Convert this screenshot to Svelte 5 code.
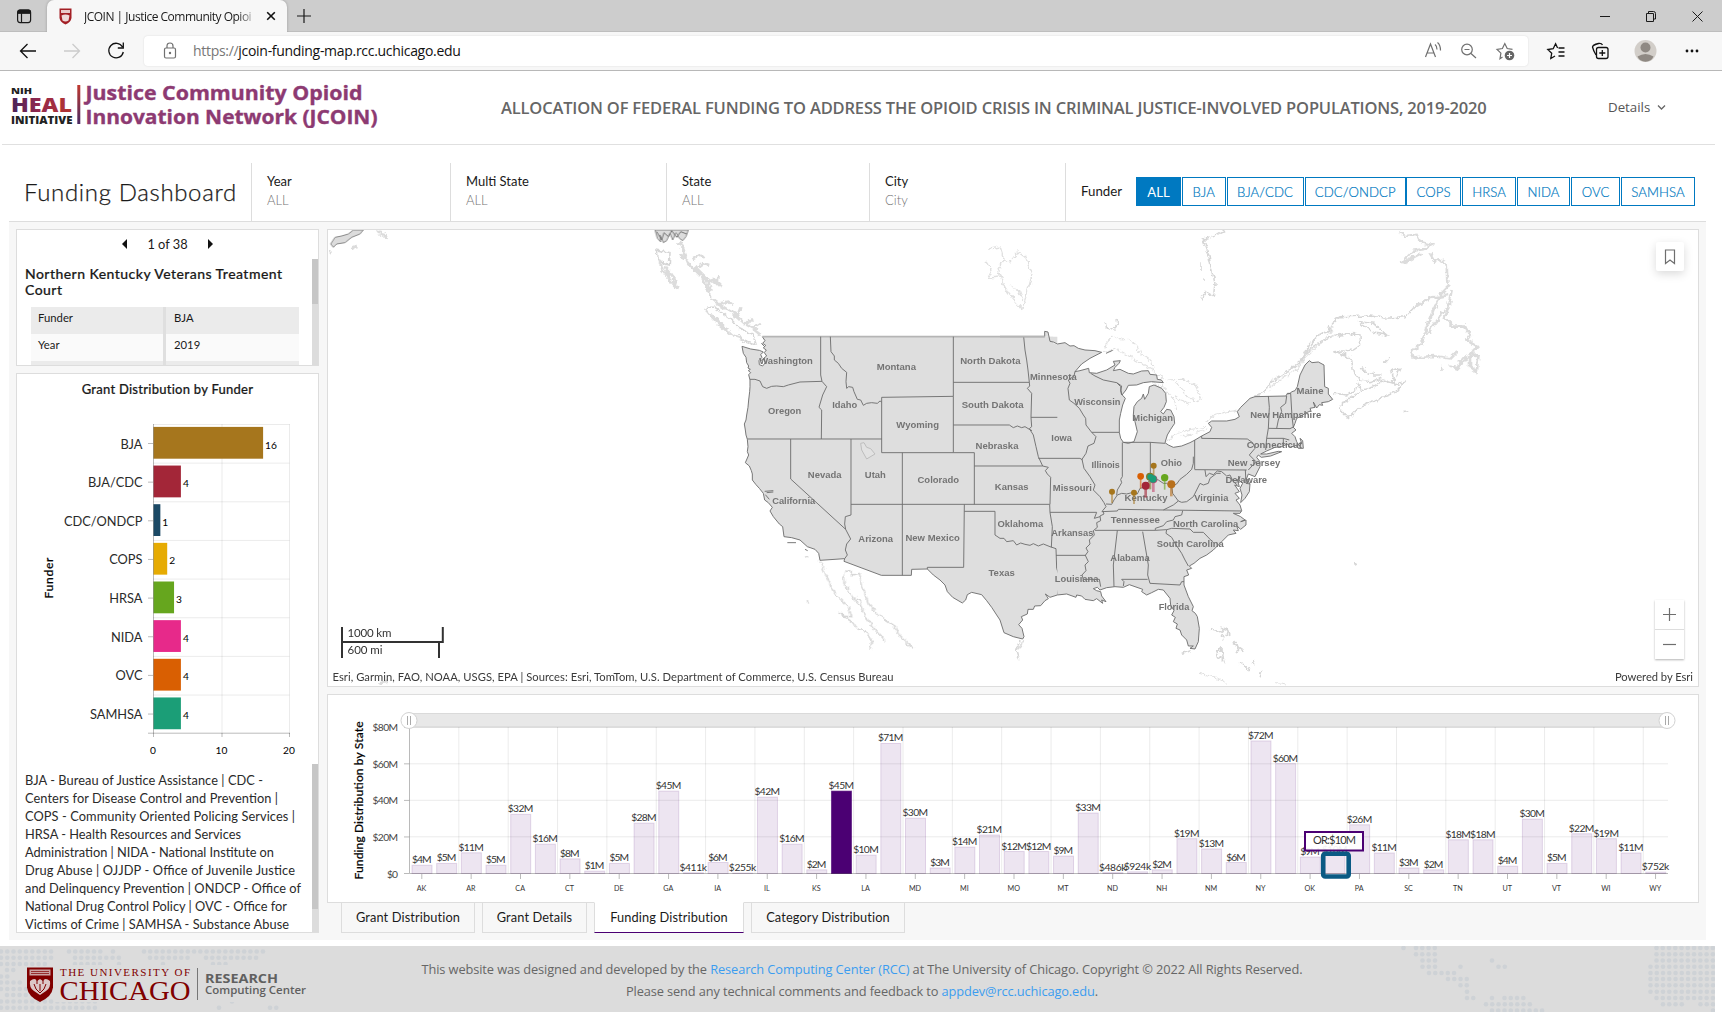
<script>
  const filters = [
    { label: 'Year', value: 'ALL', width: 199 },
    { label: 'Multi State', value: 'ALL', width: 216 },
    { label: 'State', value: 'ALL', width: 203 },
    { label: 'City', value: 'City', width: 196 }
  ];
  const buttons = [
    ['ALL', 45, 1], ['BJA', 43.5, 1], ['BJA/CDC', 77, 1], ['CDC/ONDCP', 101.500, 0], ['COPS', 55, 1],
    ['HRSA', 54, 1], ['NIDA', 53, 1], ['OVC', 49, 1], ['SAMHSA', 74, 0]
  ];
  const grants = [
    ['BJA', 16, '#a6761d'], ['BJA/CDC', 4, '#a32638'], ['CDC/ONDCP', 1, '#1b4965'], ['COPS', 2, '#e6ab02'],
    ['HRSA', 3, '#66a61e'], ['NIDA', 4, '#e7298a'], ['OVC', 4, '#d95f02'], ['SAMHSA', 4, '#1b9e77']
  ];
  const glossary = [
    'BJA - Bureau of Justice Assistance | CDC -',
    'Centers for Disease Control and Prevention |',
    'COPS - Community Oriented Policing Services |',
    'HRSA - Health Resources and Services',
    'Administration | NIDA - National Institute on',
    'Drug Abuse | OJJDP - Office of Juvenile Justice',
    'and Delinquency Prevention | ONDCP - Office of',
    'National Drug Control Policy | OVC - Office for',
    'Victims of Crime | SAMHSA - Substance Abuse'
  ];
  const glossaryWidths = [238, 253, 270, 216, 249, 270, 276, 262, 264];
  const states = [
    ['AK', 4.5, '$4M'], ['AL', 5.5, '$5M'], ['AR', 11.3, '$11M'], ['AZ', 4.5, '$5M'], ['CA', 32.3, '$32M'],
    ['CO', 16, '$16M'], ['CT', 8, '$8M'], ['DC', 1.3, '$1M'], ['DE', 5.5, '$5M'], ['FL', 27.5, '$28M'],
    ['GA', 45, '$45M'], ['HI', 0.41, '$411k'], ['IA', 6, '$6M'], ['ID', 0.26, '$255k'], ['IL', 41.7, '$42M'],
    ['IN', 16, '$16M'], ['KS', 2, '$2M'], ['KY', 45, '$45M'], ['LA', 10, '$10M'], ['MA', 71, '$71M'],
    ['MD', 30.2, '$30M'], ['ME', 3, '$3M'], ['MI', 14.4, '$14M'], ['MN', 21, '$21M'], ['MO', 12, '$12M'],
    ['MS', 12, '$12M'], ['MT', 9.5, '$9M'], ['NC', 33, '$33M'], ['ND', 0.49, '$486k'], ['NE', 0.92, '$924k'],
    ['NH', 2, '$2M'], ['NJ', 19, '$19M'], ['NM', 13.4, '$13M'], ['NV', 6, '$6M'], ['NY', 72.4, '$72M'],
    ['OH', 60, '$60M'], ['OK', 9, '$9M'], ['OR', 10, '$10M'], ['PA', 26.6, '$26M'], ['RI', 11.2, '$11M'],
    ['SC', 3, '$3M'], ['SD', 2, '$2M'], ['TN', 18.4, '$18M'], ['TX', 18.4, '$18M'], ['UT', 4, '$4M'],
    ['VA', 29.7, '$30M'], ['VT', 5.5, '$5M'], ['WA', 21.7, '$22M'], ['WI', 19, '$19M'], ['WV', 11.2, '$11M'],
    ['WY', 0.75, '$752k']
  ];
  const x0 = 409.5;
  const step = 24.675;
  const y0 = 873.5;
  const perM = 1.831;

  // Map labels: western half and eastern half, each in its own drawing frame.
  const westLabels = [
    ['Washington', 198, 122, 161], ['Montana', 529, 140, 118], ['North Dakota', 811, 122, 181], ['Minnesota', 1000, 170, 140],
    ['Oregon', 194, 273, 100], ['Idaho', 374, 254, 75], ['South Dakota', 818, 254, 186], ['Wyoming', 593, 313, 128],
    ['Nebraska', 831, 378, 129], ['Iowa', 1025, 354, 62], ['Nevada', 314, 464, 101], ['Utah', 466, 464, 63],
    ['Colorado', 655, 478, 125], ['Kansas', 875, 499, 101], ['California', 221, 543, 129], ['Arizona', 467, 657, 104],
    ['New Mexico', 638, 652, 163], ['Oklahoma', 901, 610, 137], ['Texas', 845, 759, 79]
  ];
  const eastLabels = [
    ['Wisconsin', 292, 246, 139], ['Michigan', 458, 292, 122], ['Illinois', 317, 435, 85], ['Ohio', 514, 428, 64],
    ['Missouri', 217, 503, 117], ['Kentucky', 438, 534, 129], ['Virginia', 634, 534, 102], ['Tennessee', 406, 600, 147],
    ['Arkansas', 217, 637, 126], ['North Carolina', 617, 611, 196], ['South Carolina', 571, 672, 201], ['Alabama', 390, 714, 118],
    ['Louisiana', 230, 776, 131], ['Florida', 522, 861, 92], ['Maine', 930, 213, 81], ['New Hampshire', 857, 285, 213],
    ['Connecticut', 823, 373, 165], ['New Jersey', 762, 428, 158], ['Delaware', 739, 480, 125]
  ];
  const westBorders = [
    'M302 50V165L306 184L320 200L308 225L297 262L305 270L304 357',
    'M90 178L105 178L120 183L128 200L140 205L155 199L170 198L190 200L205 195L240 186L306 184',
    'M82 357H486',
    'M331 50L333 95L343 108V120L355 130L365 145L380 157L378 185L380 205L386 200L398 202L402 215L412 238L422 240L430 256L440 250L455 248L472 250L480 243L485 246',
    'M485 232L700 229V398H485Z', 'M700 50V229', 'M700 187H928', 'M911 50L915 90L920 120L924 150L928 187',
    'M928 187L929 198L922 205L935 220L933 292L935 320L928 326', 'M700 315L868 315L880 323L892 318L905 323L915 320L928 328L936 332',
    'M933 292H1095', 'M928 326L940 345L948 380L955 410L968 438', 'M763 438H968', 'M968 438L985 442L976 452L982 462L992 472L990 553',
    'M700 398H763V553', 'M547 398V766', 'M393 553H989', 'M212 357V477L377 628',
    'M393 357V585L376 590L374 612L377 628L392 657L380 672L376 690L382 705L374 716', 'M733 553L731 742H622V747',
    'M733 574H825V645L840 655L852 655L860 665L880 662L890 675L902 669L915 673L930 676L940 671L955 678L970 672L990 680L1008 686',
    'M989 553L990 577L997 620L994 682', 'M1008 686L1010 745L1022 780L1012 825'
  ];
  const eastBorders = [
    'M115 415L240 415L248 420', 'M225 155L222 168L205 180L210 190L204 205L208 240L222 250L238 265L250 285L257 295',
    'M275 337H358', 'M257 295L258 315L275 337L288 350L282 370L264 378L258 400L246 418L252 445L270 470L285 495L280 510L300 530L312 548L318 560',
    'M150 577L290 577L283 595L300 590', 'M318 560L308 572L312 582L300 588L302 602L290 608L292 622L280 632L283 645L268 660L270 672L258 684L264 695L256 706L265 725L255 735L258 752L246 765L250 778',
    'M168 706H258', 'M248 778L298 778L302 800', 'M305 575L352 573L355 568L490 570L725 573', 'M285 631H466L500 629',
    'M318 552L335 553L342 540L352 525L365 520L380 522L400 517L412 522L420 505L432 502L440 490L450 482L452 475L475 480L490 490L500 490L515 500',
    'M367 367V470L362 478L365 488L352 510L350 525', 'M451 367V480', 'M370 367H450L495 370', 'M584 360V448', 'M584 449L740 450',
    'M580 410L580 430L575 448L560 463L540 478L530 492L515 500L518 520L535 543', 'M535 543L520 555L490 570',
    'M535 543L545 547L560 545L580 530L590 510L600 490L610 495L625 490L630 475L650 460L662 460', 'M615 450L618 470L628 460L640 464L652 453L665 455L680 468L690 465L700 485L712 495',
    'M548 572L545 585L525 590L520 600L500 605L490 617L466 625V631', 'M500 629L515 625L570 627L580 637L610 637L640 668',
    'M500 629L498 640L515 652L525 670L545 700L555 720L565 738', 'M428 635L445 735L443 765L450 790', 'M352 631L340 735L342 800',
    'M365 778L443 778', 'M365 778L372 785L370 798', 'M450 790L540 795L545 785L552 785', 'M605 348V355L742 357L758 368L765 385L748 405L768 425L745 450',
    'M805 228L808 262L805 325L800 355L797 390', 'M860 228L857 250L842 262L845 275L835 300L830 325', 'M862 222L872 220L876 290L880 322',
    'M800 355H850L868 360', 'M805 325L870 326L882 320', 'M850 355L850 378', 'M736 450L738 490L750 492', 'M350 188L310 180L285 168L272 160'
  ];
  const westCoast =
    'M127 50L135 62L128 70L137 76L130 84L139 90L133 98L140 108L132 114L136 128L128 138L118 134L117 122L126 112L122 104L130 96L118 91L92 87L66 79L70 100L78 112L80 128L86 138L84 144L91 148L85 152L92 158L86 164L90 180L90 200L89 215L86 240L84 262L80 285L78 300L73 312L76 330L78 345L82 358L84 380L82 395L86 405L76 428L88 438L94 452L97 462L97 480L108 494L118 505L130 520L134 540L145 548L157 562L150 573L160 590L178 612L188 620L192 650L215 653L240 660L262 680L285 688L296 700L300 721L374 716L372 724L484 766L574 766L575 748L622 747L640 765L660 780L675 795L682 815L698 832L727 849L737 840L742 824L755 817L785 824L800 842L815 862L830 885L840 900L852 938L880 950L908 957L912 950L906 925L896 914L908 900L904 890L922 882L924 868L940 868L944 858L962 857L975 842L985 836L976 822L990 832L1012 825';
  const eastCoast =
    'M134 50V34L144 36L150 64L160 66L172 72L195 68L210 78L222 77L235 85L255 90L285 92L305 97L270 115L245 132L225 155L240 152L266 145L268 158L290 160L320 150L345 135L340 124L361 122L357 130L345 142L340 152L360 148L385 160L400 162L425 153L445 152L450 163L470 165L472 178L484 180L490 188L455 185L430 188L410 195L385 196L378 210L366 225L362 212L365 198L350 188L362 200L364 222L376 235L368 255L362 280L358 300V337L362 355L370 367L385 370L402 365L412 335L405 305L400 285L402 260L412 245L425 235L430 222L434 238L445 220L448 200L462 195L485 205L497 220L499 245L492 262L482 275L490 282L500 268L512 270L522 290L524 310L512 328L502 345L495 368L505 375L520 382L545 378L570 368L585 360L605 348L630 335L635 322L625 310L635 303L680 303L705 298L718 290L712 275L722 262L750 235L765 230L858 228L862 220L870 220L876 215L885 212L892 200L900 165L915 135L928 122L936 128L955 126L972 135L974 200L985 205L985 222L998 238L985 245L965 248L968 256L958 254L950 264L940 246L945 262L930 265L933 272L915 280L905 288L890 295L885 310L880 322L888 330L875 340L885 350L890 365L898 378L905 370L900 355L908 362L910 385L895 385L890 376L870 382L862 372L845 380L825 382L800 393L782 402L800 402L835 394L845 395L812 408L784 412L775 405L770 412L780 425L780 440L765 470L745 462L740 475L750 492L748 515L735 535L722 548L726 525L720 505L728 490L716 480L720 470L712 480L718 500L704 495L718 515L705 520L718 535L708 540L720 555L725 572L720 580L700 580L722 590L735 600L722 605L738 600L738 615L722 628L710 618L715 632L700 630L708 640L685 645L665 665L640 690L620 705L600 715L582 730L568 738L575 745L560 750L566 765L552 770L552 795L565 830L580 860L576 872L586 880L592 890L598 925L595 965L585 987L570 985L580 978L565 978L560 960L545 945L540 930L528 925L532 912L520 905L526 892L515 885L522 872L512 855L510 835L490 810L475 808L455 818L440 825L425 815L428 808L405 800L388 794L370 802L345 800L320 803L300 810L292 802L280 806L290 812L302 815L305 828L318 845L305 840L308 850L290 836L280 842L255 838L245 828L230 825L228 832L200 822L172 825';

  const pins = [
    [461, 437, 9, '#a6761d', 30], [336, 515, 9, '#a6761d', 32], [402, 518, 9, '#a6761d', 32], [422, 469, 10, '#d95f02', 34],
    [450, 470, 12, '#7f7a2a', 36], [460, 478, 12, '#c2476f', 36], [494, 473, 11, '#66a61e', 34], [514, 493, 12, '#b8701c', 34],
    [459, 477, 11, '#1b9e77', 0], [451, 471, 9, '#1b9e77', 0], [437, 497, 12, '#a32638', 34]
  ];

  // Footer dot-matrix: [row y, first x, count]
  const dotRuns = [
    [948, 1403.5, 1], [948, 1416, 4], [954.3, 1416, 4], [960.5, 1422.5, 3], [966.8, 1422.5, 3], [966.8, 1460.5, 1], [973, 1429, 5],
    [979, 1448, 4], [985.3, 1460.5, 2], [991.8, 1467, 1], [998, 1467, 2], [998, 1492, 1], [998, 1504.5, 4], [1004.3, 1486, 8], [1010.5, 1492, 9],
    [960.5, 1492, 1], [966.8, 1498.5, 2],
    [948, 1656.5, 10], [954.3, 1656.5, 10], [960.5, 1656.5, 10], [966.8, 1650.5, 11], [973, 1650.5, 11], [979, 1650.5, 11], [985.3, 1650.5, 11],
    [991.8, 1650.5, 11], [998, 1656.5, 10], [1004.3, 1663, 4], [1004.3, 1700.5, 3], [1010.5, 1713, 1],
    [951.5, 1, 9], [951.5, 69, 6], [951.5, 113, 1], [951.5, 144, 20], [957.7, 1, 9], [957.7, 75, 8], [957.7, 150, 7], [957.7, 206, 9],
    [964, 1, 8], [964, 75, 5], [964, 119, 1], [964, 163, 1], [964, 213, 3], [970, 7, 2], [970, 163, 1], [970, 219, 2],
    [976.5, 1, 2], [976.5, 156, 2], [982.5, 1, 4], [989, 1, 5], [995, 7, 4], [1001.5, 1, 16], [1007.7, 1, 16], [1001.5, 232, 1], [1007.7, 219, 1], [1007.7, 270, 2]
  ];
  const dots = dotRuns.flatMap(([y, x, n]) => Array.from({ length: n }, (_, i) => [x + i * 6.26, y]));
</script>

<div class="window">
  <div class="tabstrip">
    <svg class="actions" width="47" height="32" viewBox="0 0 47 32"><rect x="17.6" y="10.1" width="13" height="12.5" rx="2.5" /><path d="M21.5 13v9.5M18 13.2h13" /><path class="solid" d="M17.5 12a2.5 2.5 0 0 1 2.5-2.5h8.5a2.5 2.5 0 0 1 2.5 2.5v1.5H17.5z" /></svg>
    <div class="tab">
      <svg width="13" height="17" viewBox="0 0 13 17"><path d="M.5.5h12v9.5q-.6 4.400-6 6.500Q1.100 14.400.5 10z" fill="#a31f25" /><path d="M2 2h9v3H2z" fill="#e9c9c9" /><path d="M2.500 7.500Q6.500 5.500 10.500 7.500L9.500 12.500Q6.500 14.500 3.500 12.500z" fill="#efdada" /></svg>
      <span class="tabtitle">JCOIN | Justice Community Opioi</span>
      <svg class="tabclose" width="10" height="10" viewBox="0 0 10 10"><path d="M1.200 1.200l7.600 7.600M8.800 1.200L1.200 8.800" /></svg>
    </div>
    <svg class="newtab" width="16" height="16" viewBox="0 0 16 16"><path d="M8 1v14M1 8h14" /></svg>
    <svg class="controls" width="122" height="32" viewBox="1601 0 122 32"><path d="M1601 16.500h10M1647.500 13.500h7v8h-7zM1649.500 13v-1.500h5q2 0 2 2v5.500h-1.500M1693.500 11.500l10 10M1703.500 11.500l-10 10" /></svg>
  </div>
  <div class="toolbar">
    <svg class="nav" width="144" height="38" viewBox="0 32 144 38">
      <path d="M36 51H20.500M27.500 44l-7 7 7 7" />
      <path class="off" d="M64 51h15.500M72.500 44l7 7-7 7" />
      <path d="M122.500 47a7.300 7.300 0 1 0 .8 5M123.300 42.500v5.500h-5.500" />
    </svg>
    <div class="address">
      <svg class="lock" width="14" height="18" viewBox="0 0 14 18"><rect x="1.500" y="6" width="11" height="10" rx="1.500" /><path d="M4 6V4q0-3 3-3t3 3v2" /><circle cx="7" cy="11" r=".6" /></svg>
      <span class="url"><i>https://</i>jcoin-funding-map.rcc.uchicago.edu</span>
      <svg class="right-icons" width="100" height="30" viewBox="1425 36 100 30">
        <path d="M1426.500 57l5-13 5 13M1428.500 53h6.500M1436 44.500q2 1.500 2 5M1438.500 42.500q3 2.500 3 8" />
        <circle cx="1468" cy="49.500" r="5.300" /><path d="M1472 53.500l5 4.500M1465.500 49.500h5" />
        <path d="M1503.500 57l-2.500 1.700.9-5.500-3.900-3.900 5.400-.8 2.400-4.900 2.400 4.900 5.300.8" />
        <circle class="dark" cx="1510.500" cy="55.500" r="4.800" /><path class="white" d="M1508 55.500h5M1510.500 53v5" />
      </svg>
    </div>
    <svg class="tools" width="194" height="38" viewBox="1529 32 194 38">
      <path d="M1556 56l-4.200 2.500.9-5.200-3.900-3.800 5.400-.8 2.400-4.900 2 4.200M1559.500 48h6M1559.500 52h6M1559.500 56h6" />
      <rect x="1597.500" y="47.500" width="11.500" height="11" rx="2" /><path d="M1603.300 50v6M1600.300 53h6M1597 55q-2.500-4-3.500-8 0-2 6-3.500 3-.5 4 1.500" />
      <circle cx="1646.500" cy="51" r="11" fill="#d2cec9" stroke="none" /><circle cx="1646.500" cy="47.500" r="5" fill="#8f8983" stroke="none" /><path d="M1638.500 56.500q8-5 16 0-2 5-8 5.200-6-.2-8-5.200z" fill="#8f8983" stroke="none" />
      <circle class="dot" cx="1688" cy="51" r="1.400" /><circle class="dot" cx="1693" cy="51" r="1.400" /><circle class="dot" cx="1698" cy="51" r="1.400" />
    </svg>
  </div>

  <header>
    <svg class="jcoin" width="372" height="46" viewBox="10 82 372 46">
      <defs>
        <linearGradient id="heal" x1="0" x2="1"><stop offset="0" stop-color="#45255a" /><stop offset=".45" stop-color="#93284e" /><stop offset="1" stop-color="#b5352f" /></linearGradient>
        <linearGradient id="bar" x1="0" x2="0" y1="0" y2="1"><stop offset="0" stop-color="#c0392f" /><stop offset="1" stop-color="#4a2a63" /></linearGradient>
      </defs>
      <text x="11" y="93.500" font-size="9.500" fill="#222" textLength="21" lengthAdjust="spacingAndGlyphs">NIH</text>
      <text x="11" y="111.500" font-size="20" fill="url(#heal)" textLength="61" lengthAdjust="spacingAndGlyphs">HEAL</text>
      <text x="11" y="123.500" font-size="10.500" fill="#222" textLength="61.500" lengthAdjust="spacingAndGlyphs">INITIATIVE</text>
      <path d="M77.300 85h3v39h-3z" fill="url(#bar)" />
      <g font-weight="700" fill="#8d3a72" stroke="#8d3a72" stroke-width=".35" font-size="19">
        <text x="85.500" y="99.800" textLength="277" lengthAdjust="spacingAndGlyphs">Justice Community Opioid</text>
        <text x="85.500" y="123.500" textLength="292" lengthAdjust="spacingAndGlyphs">Innovation Network (JCOIN)</text>
      </g>
    </svg>
    <h1>ALLOCATION OF FEDERAL FUNDING TO ADDRESS THE OPIOID CRISIS IN CRIMINAL JUSTICE-INVOLVED POPULATIONS, 2019-2020</h1>
    <div class="details">Details <svg width="9" height="7" viewBox="0 0 9 7"><path d="M1 1.500l3.500 3.500L8 1.500" /></svg></div>
  </header>

  <section class="filters">
    <h2>Funding Dashboard</h2>
    {#each filters as f}
      <div class="filter" style:width="{f.width}px"><b>{f.label}</b><span>{f.value}</span></div>
    {/each}
    <div class="funder">
      <b>Funder</b>
      <div class="btns">
        {#each buttons as [label, w, gap], i}
          <button class:active={i === 0} class:gap={gap === 1} style:width="{w}px">{label}</button>
        {/each}
      </div>
    </div>
  </section>

  <main>
    <aside>
      <div class="card record">
        <div class="pager"><i class="prev"></i><span>1 of 38</span><i class="next"></i></div>
        <div class="scroller">
          <div class="body">
            <h3>Northern Kentucky Veterans Treatment<br />Court</h3>
            <div class="row"><span>Funder</span><span>BJA</span></div>
            <div class="row light"><span>Year</span><span>2019</span></div>
            <div class="row"><span></span><span></span></div>
          </div>
          <div class="track"><div class="thumb t1"></div></div>
        </div>
      </div>
      <div class="card grants">
        <h4>Grant Distribution by Funder</h4>
        <svg width="301" height="364" viewBox="17 400 301 364">
          <g class="grid">
            {#each grants as _, i}<path d="M153 {424.500 + i * 38.650}H289.500" />{/each}
            <path d="M222 424V733M289.500 424V733" />
          </g>
          {#each grants as [name, n, color], i}
            <path class="tick" d="M148 {443.500 + i * 38.650}h5" />
            <rect x="153.500" y={426.900 + i * 38.650} width={n * 6.850} height="31.800" fill={color} />
            <text class="cat" x="142.500" y={448.500 + i * 38.650}>{name}</text>
            <text class="num" x={155.500 + n * 6.850} y={448.500 + i * 38.650}>{n}</text>
          {/each}
          <path class="axis" d="M153.500 424V737M148 733.200H290M222 733v4M289.500 733v4" />
          <text class="num mid" x="153" y="754">0</text><text class="num mid" x="221.500" y="754">10</text><text class="num mid" x="289" y="754">20</text>
          <text class="vert" transform="translate(53 578) rotate(-90)" textLength="41">Funder</text>
        </svg>
        <div class="scroller gl">
          <svg class="glossary" width="295" height="168" viewBox="17 764 295 168">
            {#each glossary as line, i}<text x="25" y={785.300 + i * 18} textLength={glossaryWidths[i]}>{line}</text>{/each}
          </svg>
          <div class="track"><div class="thumb t2"></div></div>
        </div>
      </div>
    </aside>

    <div class="content">
      <div class="card map">
        <svg width="1370" height="456" viewBox="328 230 1370 456">
          <defs>
            <filter id="rough" x="-5%" y="-5%" width="110%" height="110%"><feTurbulence type="fractalNoise" baseFrequency=".2" numOctaves="3" seed="4" /><feDisplacementMap in="SourceGraphic" scale="6" xChannelSelector="R" yChannelSelector="G" /></filter>
          </defs>
          <g class="abroad" filter="url(#rough)">
            <g transform="translate(320 220) scale(.33333)">
              <path class="heavy" d="M1078 65L1092 100L1105 130L1130 155L1145 170L1160 200L1175 235L1195 252L1225 270L1250 288L1275 312L1300 325L1325 345M1085 75L1098 108M1125 140L1160 175L1172 210M1210 262L1255 288M1080 100L1092 118M1118 118L1140 105L1150 115M1130 145L1150 130L1168 135M1150 175L1180 185L1198 168M1160 190L1190 185L1205 200M1200 250L1225 245L1240 255M1240 290L1255 280L1262 262M1280 315L1298 295M1300 325L1322 310" />
              <path d="M1010 90L1050 98L1048 135L1025 130L1010 110Z" /><path class="heavy" d="M1018 120L1028 150L1050 180L1072 205L1060 170L1035 140L1050 175" />
              <path class="heavy" d="M1155 265L1175 290L1200 315L1235 345L1262 355M1185 295L1225 330" /><path d="M1155 262L1185 262L1230 295L1260 325L1300 345L1308 375L1270 362L1255 340" />
              <path class="heavy" d="M170 38L190 42L205 55M95 80L110 82M25 97L35 95M175 1390L205 1385" />
            </g>
            <g transform="translate(720 320) scale(.33333)">
              <path d="M300 722L320 770L345 822L385 860L395 890L365 888L360 875L375 892L395 905L410 925L440 938L455 965L450 990M370 760L372 790L395 825L410 850L425 860L440 895L470 935L495 965M370 755L385 752L400 765L418 760L428 800L445 850L480 890L520 915L540 950L580 985M402 830L420 840L425 855" />
              <path d="M262 840L264 852M256 708L262 712" /><path d="M912 960L905 975L895 985" />
            </g>
            <g transform="translate(1000 320) scale(.33333)">
              <path d="M318 0L322 25L340 30L352 15L348 0" /><path class="thin" d="M313 85L325 60L345 48L365 60L385 58L410 75L420 100L455 125L460 150M310 98L345 85L460 150L490 180M500 180L550 178L585 195L605 235L590 245L560 230L545 205L525 190M525 230L540 240L570 250M455 185L495 205L520 235L530 265M500 372L520 345L560 330L620 322M620 305L640 285L680 275L715 270M545 350L590 338L622 330" />
              <path class="thin" d="M765 228L800 210L840 180L890 150L915 115L960 75L1000 20M885 150L925 95L1000 45L1060 40" />
              <path d="M545 1000L575 992M630 930L660 935L680 925L690 945M665 940L672 955M650 1000L660 980L670 1010M700 965L715 980L730 990M60 960L50 990L58 1018M1062 732L1070 730" />
            </g>
            <g transform="translate(1200 220) scale(.33333)">
              <path d="M75 30L40 50L10 60L25 100L35 150L45 190L40 230L15 215L5 245" /><path d="M3 130V150M12 175V180" />
              <path class="heavy" d="M595 35L615 48L650 45L660 65L695 75L670 88L640 92L605 130L625 122L665 100M690 100L705 125L725 120L740 130L742 185L745 200L715 230L685 235L655 255L640 265" />
              <path d="M640 265L615 290L560 295L510 288L420 290L395 310L388 330L350 350L325 380L300 425L275 445L210 490L195 515L160 530" />
              <path d="M300 425L330 385L380 355L440 340L480 345L482 375L460 390L400 395L440 405L455 420L460 455L480 480L510 485L545 475L545 465L520 465L480 445M475 305L520 310L560 345L525 340L485 315ZM565 415L550 430M400 520L440 525L480 500M475 490L485 512L520 500L550 480L580 490L600 445L575 450L585 495L615 485L590 515L530 540L480 560L445 595L422 570L425 550L480 515M610 575L625 572" />
              <path class="heavy" d="M755 210L745 260L735 295L760 320L795 320L812 345L800 360L830 380L815 400L835 410L830 455L810 440L810 405L785 420L775 445L745 440M745 225L720 230L700 270L675 335L665 370L635 395L640 412L700 408L750 415L770 395M680 345L735 270M725 435L728 450" />
              <path d="M65 1222L85 1235L80 1252M30 1230L60 1235M50 1290L60 1282L72 1325L55 1310ZM98 1270L118 1282L110 1300M120 1330L150 1350M165 1320L160 1335M185 1355L180 1370M465 1031L470 1030" /><path class="thin" d="M0 1360L40 1370L80 1390M230 1388L260 1392" />
            </g>
            <path class="thin" d="M989 249L1000 247L1004 260L998 268L1002 282L1008 292L1016 302L1022 309L1028 290L1032 275L1026 258L1018 252L1010 262L1004 260M986 262L992 270L988 278L1000 277M1010 285L1018 290L1022 300" />
          </g>
          <g transform="translate(320 220) scale(.33333)">
            <path class="land" d="M32 72L45 52L65 48L85 42L100 30H130L120 42L95 52L75 68L50 72L40 82Z" />
            <path class="land" d="M1005 30H1105L1098 50L1088 62L1078 55L1068 38L1058 60L1050 40L1040 62L1030 68L1020 45L1022 66L1012 55Z" /><path class="edge" d="M1010 35L1025 60L1032 38L1045 50L1055 32L1070 52L1082 35L1100 42" />
          </g>
          <g transform="translate(720 320) scale(.33333)">
            <path class="fill" d="{westCoast}H1030V80L1000 70V50Z" />
            <path class="edge" d={westCoast} /><path class="lightedge" d="M127 50H974" />
            {#each westBorders as d}<path class="edge" {d} />{/each}
            <path class="lake" d="M422 370L432 368L440 382L452 386L465 402L440 417L425 390Z" />
            <path class="edge" d="M134 514L160 512M140 518L160 516M136 524L148 538M202 668L228 668M255 688L263 692M124 70L134 80M120 122L132 118" />
          </g>
          <g transform="translate(1000 320) scale(.33333)">
            <path class="fill" d="{eastCoast}V50Z" /><path class="edge" d={eastCoast} /><path class="lightedge" d="M0 50H134" /><path class="edge" d="M318 100L338 91" />
            {#each eastBorders as d}<path class="edge" {d} />{/each}
            {#each eastLabels as [name, x, y, w]}<text class="state" {x} y={y + 10} textLength={w} lengthAdjust="spacingAndGlyphs">{name}</text>{/each}
            {#each pins as [x, y, r, c, len]}
              <path d="M{x} {y}v{len + 2}" stroke={c} stroke-width={r > 11 ? 8 : 5} opacity=".6" /><circle cx={x} cy={y} {r} fill={c} />
            {/each}
          </g>
          <g transform="translate(720 320) scale(.33333)">
            {#each westLabels as [name, x, y, w]}<text class="state" {x} y={y + 10} textLength={w} lengthAdjust="spacingAndGlyphs">{name}</text>{/each}
          </g>
          <path class="scale" d="M342 627v31M342 642H442.800V627M439 642v16" />
          <text class="km" x="347.500" y="637" textLength="44">1000 km</text><text class="km" x="347.500" y="654" textLength="35">600 mi</text>
          <text class="attr" x="332.500" y="681" textLength="561">Esri, Garmin, FAO, NOAA, USGS, EPA | Sources: Esri, TomTom, U.S. Department of Commerce, U.S. Census Bureau</text>
          <text class="attr" x="1615" y="681" textLength="78">Powered by Esri</text>
        </svg>
        <div class="bookmark"><svg width="12" height="16" viewBox="0 0 12 16"><path d="M1.500 1h9v13.500L6 11l-4.500 3.500z" /></svg></div>
        <div class="zoom"><span><svg width="15" height="15" viewBox="0 0 15 15"><path d="M1 7.500h13M7.500 1v13" /></svg></span><span><svg width="15" height="15" viewBox="0 0 15 15"><path d="M1 7.500h13" /></svg></span></div>
      </div>

      <div class="card chart">
        <svg width="1370" height="207" viewBox="328 695 1370 207">
          <rect x="409.500" y="713.500" width="1258" height="13.500" fill="#e8e8e8" stroke="#dadada" />
          <g class="grid">
            {#each [0, 1, 2, 3] as k}<path d="M409 {727.300 + k * 36.500}H1668" />{/each}
            {#each Array.from({ length: 25 }) as _, k}<path d="M{x0 + (k + 1) * 2 * step} 727V873" />{/each}
          </g>
          {#each states as [code, v, label], i}
            <rect class="bar" class:selected={code === 'KY'} x={x0 + i * step + 2.500} y={y0 - v * perM} width="20" height={v * perM} />
            <text class="val" x={x0 + i * step + 12.300} y={y0 - v * perM - 2} textLength={label.length === 5 ? 27.500 : label.length === 4 ? 25.500 : 19.500}>{label}</text>
            {#if i % 2 === 0}
              <path class="tick" d="M{x0 + i * step + 12.300} 874v5" /><text class="code" x={x0 + i * step + 12} y="891">{code}</text>
            {/if}
          {/each}
          <path class="axis" d="M409.500 727V873.500H1668" />
          {#each ['$80M', '$60M', '$40M', '$20M', '$0'] as t, k}
            <path class="tick" d="M404 {727.300 + k * 36.550}h5" /><text class="ylab" x="398" y={731 + k * 36.650} textLength={k === 4 ? 11 : 25.500}>{t}</text>
          {/each}
          <text class="vert" transform="translate(362.500 800.500) rotate(-90)" textLength="158">Funding Distribution by State</text>
          {#each [409, 1667] as cx}
            <circle class="grip" {cx} cy="720.500" r="8" /><path class="gripline" d="M{cx - 1.500} 716v9M{cx + 1.500} 716v9" />
          {/each}
          <rect x="1305" y="832" width="58" height="18.500" fill="#fff" fill-opacity=".93" stroke="#4b0073" stroke-width="2" />
          <text class="val tip" x="1334.500" y="844.300" textLength="43">OR:$10M</text>
          <rect x="1323.200" y="853.700" width="25.500" height="22.800" rx="2" fill="none" stroke="#0a5a84" stroke-width="4.600" />
        </svg>
      </div>
      <nav>
        <span class="t134">Grant Distribution</span><span class="t105">Grant Details</span><span class="t150 on">Funding Distribution</span><span class="t154">Category Distribution</span>
      </nav>
    </div>
  </main>

  <footer>
    <svg class="footart" width="1715" height="66" viewBox="0 946 1715 66">
      {#each dots as [x, y]}<circle cx={x} cy={y} r="2.300" fill="#ced2d6" />{/each}
      <rect x="55" y="965" width="255" height="37" fill="#dcdcdc" />
      <path d="M27 967.500h26v20q-1 9-13 14.500-12-5.500-13-14.500z" fill="#800000" />
      <path d="M29.500 969.500h21v6h-21z" fill="#c9a3a3" /><path d="M31 971.500h18M31 973.500h18" stroke="#800000" stroke-width=".7" />
      <path d="M30 981q5-4 7 0l3-2 3 2q2-4 7 0 1 7-4 10l-6 4-6-4q-5-3-4-10z" fill="#dcc8c8" /><path d="M34 984l2 5 4 4 4-4 2-5M37 980v4M43 980v4M40 984v7" stroke="#800000" stroke-width="1" fill="none" />
      <g class="uc"><text x="60" y="975.800" font-size="11" textLength="130">THE UNIVERSITY OF</text><text x="59.500" y="999.800" font-size="27" textLength="131" lengthAdjust="spacingAndGlyphs">CHICAGO</text></g>
      <path d="M197.500 968v32" stroke="#777" />
      <g class="rcc"><text x="205" y="982.700" font-size="11.500" font-weight="700" textLength="73" lengthAdjust="spacingAndGlyphs">RESEARCH</text><text x="205" y="993.700" font-size="10.500" font-weight="600" textLength="101" lengthAdjust="spacingAndGlyphs">Computing Center</text></g>
      <g class="legal">
        <text x="421.500" y="974" textLength="881">This website was designed and developed by the <tspan>Research Computing Center (RCC)</tspan> at The University of Chicago. Copyright © 2022 All Rights Reserved.</text>
        <text x="626" y="996" textLength="472">Please send any technical comments and feedback to <tspan>appdev@rcc.uchicago.edu</tspan>.</text>
      </g>
    </svg>
  </footer>
</div>

<style>
  :global(body) { margin: 0; background: #fff; }
  * { box-sizing: border-box; }
  svg { display: block; flex: none; }
  .window { width: 1722px; height: 1012px; overflow: hidden; display: flex; flex-direction: column; font-family: Lato, 'Open Sans', sans-serif; color: #1a1a1a; }
  .tabstrip { height: 32px; background: #cdcdcd; display: flex; align-items: center; flex: none; border-bottom: 1px solid #bebebe; }
  .tabstrip svg { fill: none; stroke: #1a1a1a; stroke-width: 1.2; }
  .tabstrip .solid { fill: #1a1a1a; stroke: none; }
  .tab { width: 240px; height: 32px; background: #f7f7f7; border-radius: 7px 7px 0 0; display: flex; align-items: center; padding-left: 12px; box-shadow: 0 0 3px rgba(0, 0, 0, 0.25); clip-path: inset(-4px -4px 0 -4px); font: 12px 'Open Sans', sans-serif; align-self: flex-start; }
  .tab svg { stroke: none; }
  .tabtitle { margin-left: 12px; width: 174px; overflow: hidden; white-space: nowrap; letter-spacing: -0.5px; mask-image: linear-gradient(90deg, #000 88%, transparent 100%); }
  .tab .tabclose { margin-left: 8px; stroke: #111; stroke-width: 1.6; }
  .newtab { margin-left: 9px; }
  .controls { margin-left: auto; }
  .tabstrip .controls { stroke-width: 1; }
  .toolbar { height: 39px; background: #f7f7f7; border-bottom: 1px solid #b8b8b8; display: flex; align-items: center; flex: none; }
  .nav, .tools { fill: none; stroke: #111; stroke-width: 1.3; }
  .off { stroke: #ccc; }
  .dot { fill: #111; stroke: none; }
  .address { width: 1384px; height: 30px; background: #fff; border-radius: 4px; display: flex; align-items: center; padding-left: 19px; box-shadow: 0 0 2px rgba(0, 0, 0, 0.12); }
  .lock, .right-icons { fill: none; stroke: #707070; stroke-width: 1.2; }
  .right-icons { margin: 0 4px 0 auto; }
  .dark { fill: #666; stroke: none; }
  .white { stroke: #fff; }
  .url { margin-left: 16px; font: 14px 'Open Sans', sans-serif; letter-spacing: -0.3px; color: #111; position: relative; top: -1px; }
  .url i { font-style: normal; color: #777; }

  header { width: 1713px; height: 74px; margin-left: 2px; border-bottom: 1px solid #e0e0e0; display: flex; align-items: center; flex: none; padding: 0 0 4px 8px; }
  .jcoin { font-family: 'Open Sans', sans-serif; font-weight: 800; margin-top: -2px; }
  h1 { margin: 4px 0 0 119px; width: 988px; font: 600 16.5px 'Open Sans', sans-serif; color: #666; letter-spacing: -0.175px; white-space: nowrap; }
  .details { margin-left: 119px; font: 13.3px 'Open Sans', sans-serif; color: #555; display: flex; align-items: center; gap: 7px; margin-top: 3px; }
  .details svg { fill: none; stroke: #666; stroke-width: 1.3; }

  .filters { width: 1697px; height: 59px; margin: 18px 0 0 9px; border-bottom: 1px solid #ddd; display: flex; flex: none; }
  h2 { width: 242px; margin: 0; padding: 0 0 0 15px; font-size: 24px; line-height: 57px; font-weight: 300; letter-spacing: 0.65px; white-space: nowrap; -webkit-text-stroke: 0.25px #1a1a1a; }
  .filter { border-left: 1px solid #ddd; padding: 9px 0 0 15px; display: flex; flex-direction: column; font-size: 13px; line-height: 19px; }
  .filter b, .funder b { font-weight: 400; }
  .filter span { color: #757575; font-weight: 300; }
  .funder { flex: 1; border-left: 1px solid #ddd; padding-left: 15px; display: flex; align-items: center; font-size: 13.3px; padding-top: 0; }
  .funder b { width: 55px; margin-bottom: 3px; }
  .btns { display: flex; margin-bottom: 1px; }
  button { height: 29px; padding: 0; border: 1px solid #0079c1; background: #fff; color: #0079c1; font: 300 13.2px Lato, sans-serif; letter-spacing: 0.05px; -webkit-text-stroke: 0.2px #0079c1; }
  button.gap { margin-right: 1px; }
  button.active { background: #0079c1; color: #fff; font-weight: 400; -webkit-text-stroke: 0; }

  main { width: 1697px; height: 718px; margin-left: 9px; background: #f7f7f7; display: flex; gap: 8px; padding: 7px 7px 0; flex: none; }
  .card { border: 1px solid #ddd; background: #fff; }
  aside { width: 303px; display: flex; flex-direction: column; gap: 7px; flex: none; }
  .record { height: 137px; }
  .pager { height: 29px; display: flex; align-items: center; justify-content: center; gap: 20px; font-size: 12.8px; font-weight: 400; padding: 0 0 1px; }
  .prev, .next { border: 5px solid transparent; border-left-width: 0; border-right: 5px solid #111; }
  .next { border-right-width: 0; border-left: 5px solid #111; }
  .scroller { display: flex; height: 106px; overflow: hidden; }
  .body { width: 295px; }
  h3 { margin: 7px 0 9px 8px; font-size: 14px; line-height: 16px; font-weight: 500; letter-spacing: 0.45px; white-space: nowrap; -webkit-text-stroke: 0.2px #1a1a1a; }
  .row { margin-left: 14px; width: 268px; height: 27px; background: #ebebeb; display: flex; font-size: 11.3px; line-height: 22px; font-weight: 400; }
  .row span { width: 132px; padding-left: 7px; }
  .row span + span { border-left: 3px solid #dfdfdf; padding-left: 8px; width: 136px; }
  .light { background: #fafafa; }
  .track { width: 6px; background: #dcdcdc; }
  .thumb { background: #c6c6c6; }
  .t1 { height: 45px; }
  .t2 { height: 145px; }
  .grants { height: 560px; }
  h4 { margin: 0; height: 26px; line-height: 30px; font-size: 13px; font-weight: 500; text-align: center; letter-spacing: 0.25px; -webkit-text-stroke: 0.2px #1a1a1a; }
  .gl { height: 168px; }
  .glossary { font-size: 12.8px; font-weight: 400; fill: #2a2a2a; }
  .grid { stroke: #000; stroke-opacity: 0.08; fill: none; }
  .axis, .tick { fill: none; stroke: #000; stroke-opacity: 0.27; }
  .cat { font-size: 12.8px; font-weight: 400; text-anchor: end; fill: #2a2a2a; }
  .num { font-size: 10.2px; font-weight: 400; }
  .mid { text-anchor: middle; }
  .vert { font-size: 12px; font-weight: 500; text-anchor: middle; stroke: #1a1a1a; stroke-width: 0.2; }

  .content { width: 1372px; }
  .map { height: 458px; position: relative; }
  .abroad { fill: none; stroke: #d6d6d6; stroke-width: 4.5; }
  .abroad > path { stroke-width: 1.3; }
  .heavy { stroke-width: 8; stroke: #dcdcdc; }
  .thin { stroke-width: 3.2; stroke: #e0e0e0; }
  .land { fill: #dcdcdc; stroke: #888; stroke-width: 3; }
  .fill { fill: #dedede; }
  .edge { fill: none; stroke: #6f6f6f; stroke-width: 2.8; }
  .lightedge { stroke: #b5b5b5; stroke-width: 5; }
  .lake { fill: #e2e2e2; stroke: #bdbdbd; stroke-width: 3; }
  .state { font: 700 29.5px 'Liberation Sans', sans-serif; fill: #747474; text-anchor: middle; }
  .scale { fill: none; stroke: #323232; stroke-width: 2; }
  .km { font-size: 11.5px; fill: #323232; }
  .attr { font-size: 11.2px; font-weight: 400; fill: #3a3a3a; }
  .bookmark { position: absolute; right: 14px; top: 12px; width: 28px; height: 29px; background: #fff; border-radius: 2px; box-shadow: 0 3px 10px rgba(0, 0, 0, 0.15); display: grid; place-items: center; }
  .bookmark svg, .zoom svg { fill: none; stroke: #6e6e6e; stroke-width: 1.2; }
  .zoom { position: absolute; right: 14px; bottom: 27px; width: 29px; background: #fff; box-shadow: 0 1px 2px rgba(0, 0, 0, 0.3); }
  .zoom span { height: 29px; display: grid; place-items: center; }
  .zoom span + span { border-top: 1px solid #ddd; height: 30px; }
  .chart { height: 209px; margin-top: 7px; }
  .bar { fill: #4b0073; fill-opacity: 0.1; stroke: #4b0073; stroke-opacity: 0.14; }
  .selected { fill-opacity: 1; stroke-opacity: 0.6; }
  .val { font-size: 10.3px; font-weight: 400; text-anchor: middle; fill: #333; }
  .tip { font-size: 11px; }
  .code { font-size: 7.2px; text-anchor: middle; fill: #333; }
  .ylab { font-size: 10.3px; font-weight: 400; text-anchor: end; fill: #444; }
  .grip { fill: #fff; stroke: #d2d2d2; }
  .gripline { stroke: #aaa; }
  nav { display: flex; gap: 7px; padding-left: 14px; margin-top: -1px; position: relative; font-size: 12.8px; font-weight: 400; letter-spacing: 0.12px; }
  nav span { height: 31px; line-height: 28px; border: 1px solid #ddd; background: #f7f7f7; text-align: center; white-space: nowrap; }
  nav .on { background: #fff; border-top-color: #fff; border-bottom-color: #4b0073; }
  .t134 { width: 134px; }
  .t105 { width: 105px; }
  .t150 { width: 150px; }
  .t154 { width: 154px; }

  footer { margin-top: 6px; width: 1715px; height: 66px; background: #dcdcdc; flex: none; }
  .uc { fill: #800000; font-family: 'Liberation Serif', serif; }
  .rcc { fill: #606060; font-family: 'Open Sans', sans-serif; }
  .legal { font: 12.8px 'Open Sans', sans-serif; fill: #666; }
  .legal tspan { fill: #3b9cf0; }
</style>
